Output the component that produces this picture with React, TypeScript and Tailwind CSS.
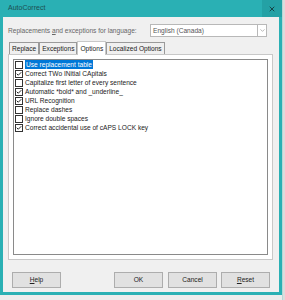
import { Check, ChevronDown, X } from 'lucide-react';

const options = [
  { label: 'Use replacement table', checked: false, selected: true },
  { label: 'Correct TWo INitial CApitals', checked: true },
  { label: 'Capitalize first letter of every sentence', checked: false },
  { label: 'Automatic *bold* and _underline_', checked: true },
  { label: 'URL Recognition', checked: true },
  { label: 'Replace dashes', checked: false },
  { label: 'Ignore double spaces', checked: false },
  { label: 'Correct accidental use of cAPS LOCK key', checked: true },
];

const tabs = ['Replace', 'Exceptions', 'Options', 'Localized Options'];

function Btn({ children, className = '' }: { children: React.ReactNode; className?: string }) {
  return (
    <div
      className={`h-[16px] w-[49px] flex items-center justify-center bg-[#e1e1e1] border border-[#adadad] text-[6.6px] text-[#222] ${className}`}
    >
      {children}
    </div>
  );
}

export default function App() {
  return (
    <div
      className="w-[285px] h-[300px] bg-[#ececec] relative overflow-hidden"
      style={{ fontFamily: '"Liberation Sans", Arial, sans-serif' }}
    >
      <div className="w-[282px] h-[295px] bg-[#2ab0b4] flex flex-col px-[3px] pb-[3px]">
        <div className="h-[17px] flex items-center justify-between -mx-[3px]">
          <span className="pl-[8px] text-[7px] text-[#1d4f52]">AutoCorrect</span>
          <div className="w-[20px] h-[17px] bg-[#24a1a5] flex items-center justify-center">
            <X size={8} strokeWidth={3} className="text-[#164548]" />
          </div>
        </div>

        <div className="flex-1 bg-[#f0f0f0] flex flex-col pl-[5px] pr-[6px]">
          <div className="flex items-center justify-between mt-[7px] h-[13px] pr-[6px]">
            <span className="text-[6.6px] text-[#666]">
              Replacements <u>a</u>nd exceptions for language:
            </span>
            <div className="w-[117px] h-[13px] bg-white border border-[#b8b8b8] flex items-center justify-between">
              <span className="pl-[2px] text-[6.6px] text-[#555]">English (Canada)</span>
              <div className="w-[9px] h-full border-l border-[#b8b8b8] flex items-center justify-center">
                <ChevronDown size={7} className="text-[#888]" />
              </div>
            </div>
          </div>

          <div className="flex items-end mt-[3px] pl-[1px] h-[14px]">
            {tabs.map((t) => (
              <div
                key={t}
                className={
                  t === 'Options'
                    ? 'h-[14px] px-[2px] bg-white border border-b-0 border-[#c8c8c8] text-[6.6px] text-[#222] flex items-center -mb-px relative z-10'
                    : 'h-[12px] px-[2px] bg-[#f0f0f0] border border-b-0 border-[#9a9a9a] text-[6.6px] text-[#222] flex items-center'
                }
              >
                {t}
              </div>
            ))}
          </div>

          <div className="h-[206px] bg-white border border-[#c8c8c8] p-[4px]">
            <div className="h-full border border-[#8a8a8a] pt-[0px] pl-[1px]">
              {options.map((o) => (
                <div key={o.label} className="flex items-center h-[9px] gap-[2px]">
                  <div className="w-[8px] h-[8px] border border-[#333] bg-white flex items-center justify-center">
                    {o.checked && <Check size={8} strokeWidth={3.5} className="text-black" />}
                  </div>
                  <span
                    className={
                      o.selected
                        ? 'text-[6.6px] leading-[9px] bg-[#0078d7] text-white px-[1px]'
                        : 'text-[6.6px] leading-[9px] text-[#222]'
                    }
                  >
                    {o.label}
                  </span>
                </div>
              ))}
            </div>
          </div>

          <div className="flex items-center mt-[12px] pl-[4px]">
            <Btn>
              <u>H</u>elp
            </Btn>
            <Btn className="ml-[53px]">OK</Btn>
            <Btn className="ml-[5px]">Cancel</Btn>
            <Btn className="ml-[4px]">
              <u>R</u>eset
            </Btn>
          </div>
        </div>
      </div>
      <div className="absolute right-0 top-0 h-[300px] w-[3px] bg-[#dcdcdc] border-l border-[#b9d6d6]" />
    </div>
  );
}
